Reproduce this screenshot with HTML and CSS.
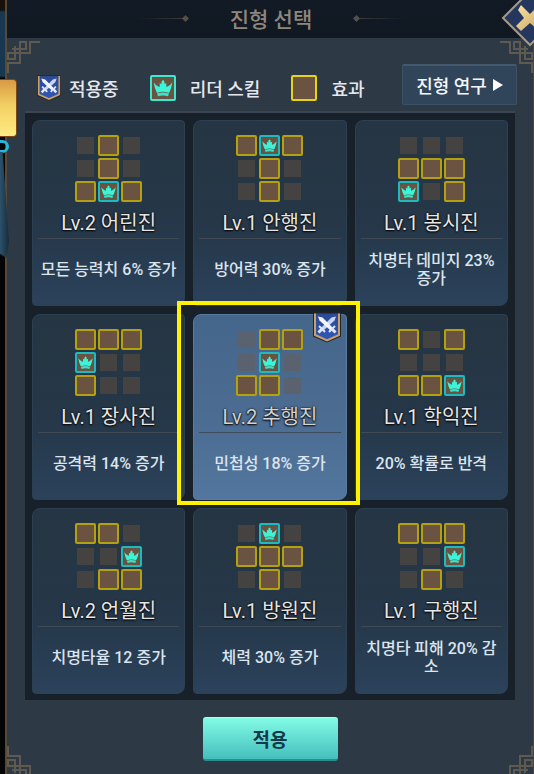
FILE: index.html
```
<!DOCTYPE html>
<html lang="ko">
<head>
  <meta charset="UTF-8">
  <meta name="viewport" content="width=device-width, initial-scale=1.0">
  <title>진형 선택</title>
  <link rel="stylesheet" href="styles.css">
</head>
<body>
  <!-- Shared icons -->
  <svg class="defs" aria-hidden="true">
    <defs>
      <linearGradient id="blue" x1="0" y1="0" x2="0" y2="1">
        <stop offset="0" stop-color="#2c4a94"/>
        <stop offset="1" stop-color="#2f57b8"/>
      </linearGradient>
      <linearGradient id="gold" x1="0" y1="0" x2="1" y2="1">
        <stop offset="0" stop-color="#f7e3a4"/>
        <stop offset="1" stop-color="#c9a560"/>
      </linearGradient>
      <symbol id="crown" viewBox="0 0 20 20">
        <path d="M1.500 5Q5 9 7 9L7 5.500L8.500 6.500Q8.500 3 10 3Q11.500 3 11.500 6.500L13 5.500L13 9Q15 9 18.500 5Q17.500 11 15.500 14.500Q10 12.500 4.500 14.500Q2.500 11 1.500 5Z" fill="#3cf5d8"/>
        <path d="M4.500 15Q10 13 15.500 15L14.500 17.500Q10 16 5.500 17.500Z" fill="#37e3cb"/>
      </symbol>
      <symbol id="shield" viewBox="0 0 28 30">
        <path d="M0 0H28V24L14 30L0 24Z" fill="#23242c"/>
        <path d="M2 1V22.500L14 28L26 22.500V1" fill="url(#blue)" stroke="#c9a166" stroke-width="2"/>
        <path d="M23 4L18.500 5L8 15.500L10.500 18L21.500 8Z" fill="#c9d5f4"/>
        <path d="M5 4L9.500 5L20 15.500L17.500 18L6.500 8Z" fill="#f2f5ff"/>
        <path d="M6 13.500L12 19.500M22 13.500L16 19.500" stroke="#dfe7fb" stroke-width="2"/>
        <path d="M8.500 17L5.500 20M19.500 17L22.500 20" stroke="#dfe7fb" stroke-width="3"/>
      </symbol>
      <symbol id="fret" viewBox="0 0 34 34">
        <path d="M1 33V23H13V2H19V9H5M33 2H23V13H1V19H8V6" fill="none" stroke="#5f5a50" stroke-width="2"/>
      </symbol>
    </defs>
  </svg>

  <div class="backdrop" aria-hidden="true">
    <span class="gold-tab"></span>
    <span class="ring"></span>
    <span class="cloak"></span>
  </div>

  <main class="panel">
    <svg class="fret top-left" aria-hidden="true"><use href="#fret"/></svg>
    <svg class="fret top-right" aria-hidden="true"><use href="#fret"/></svg>
    <svg class="fret bottom-left" aria-hidden="true"><use href="#fret"/></svg>
    <svg class="fret bottom-right" aria-hidden="true"><use href="#fret"/></svg>

    <header class="title-bar">
      <span class="rule"></span>
      <h1>진형 선택</h1>
      <span class="rule right"></span>
      <button class="close" type="button" aria-label="닫기">
        <svg viewBox="0 0 58 58" aria-hidden="true">
          <path d="M29 1L57 29L29 57L1 29Z" fill="#0d1420"/>
          <path d="M29 2L56 29L29 56L2 29Z" fill="#26375f" stroke="#a59a86" stroke-width="2"/>
          <path d="M20 16L29 25L38 16L43 21L35 29L43 37L38 42L29 34L20 42L15 37L23 29L17 21Z" fill="url(#gold)"/>
        </svg>
      </button>
    </header>

    <div class="legend">
      <ul>
        <li><svg class="shield" aria-hidden="true"><use href="#shield"/></svg>적용중</li>
        <li><span class="cell leader"><svg><use href="#crown"/></svg></span>리더 스킬</li>
        <li><span class="cell on"></span>효과</li>
      </ul>
      <button class="research" type="button">진형 연구
        <svg viewBox="0 0 10 12" aria-hidden="true"><path d="M0 0L10 6L0 12Z" fill="#fff"/></svg>
      </button>
    </div>

    <section class="board">
      <button class="card" type="button">
        <span class="grid">
          <i class="cell"></i><i class="cell on"></i><i class="cell"></i>
          <i class="cell"></i><i class="cell on"></i><i class="cell"></i>
          <i class="cell on"></i><i class="cell leader"><svg><use href="#crown"/></svg></i><i class="cell on"></i>
        </span>
        <span class="name">Lv.2 어린진</span>
        <span class="effect">모든 능력치 6% 증가</span>
      </button>

      <button class="card" type="button">
        <span class="grid">
          <i class="cell on"></i><i class="cell leader"><svg><use href="#crown"/></svg></i><i class="cell on"></i>
          <i class="cell"></i><i class="cell on"></i><i class="cell"></i>
          <i class="cell"></i><i class="cell on"></i><i class="cell"></i>
        </span>
        <span class="name">Lv.1 안행진</span>
        <span class="effect">방어력 30% 증가</span>
      </button>

      <button class="card" type="button">
        <span class="grid">
          <i class="cell"></i><i class="cell"></i><i class="cell"></i>
          <i class="cell on"></i><i class="cell on"></i><i class="cell on"></i>
          <i class="cell leader"><svg><use href="#crown"/></svg></i><i class="cell"></i><i class="cell on"></i>
        </span>
        <span class="name">Lv.1 봉시진</span>
        <span class="effect">치명타 데미지 23%<br>증가</span>
      </button>

      <button class="card" type="button">
        <span class="grid">
          <i class="cell on"></i><i class="cell on"></i><i class="cell on"></i>
          <i class="cell leader"><svg><use href="#crown"/></svg></i><i class="cell"></i><i class="cell"></i>
          <i class="cell on"></i><i class="cell"></i><i class="cell"></i>
        </span>
        <span class="name">Lv.1 장사진</span>
        <span class="effect">공격력 14% 증가</span>
      </button>

      <button class="card selected" type="button" aria-pressed="true">
        <svg class="shield badge" aria-hidden="true"><use href="#shield"/></svg>
        <span class="grid">
          <i class="cell"></i><i class="cell on"></i><i class="cell on"></i>
          <i class="cell"></i><i class="cell leader"><svg><use href="#crown"/></svg></i><i class="cell"></i>
          <i class="cell on"></i><i class="cell on"></i><i class="cell"></i>
        </span>
        <span class="name">Lv.2 추행진</span>
        <span class="effect">민첩성 18% 증가</span>
      </button>

      <button class="card" type="button">
        <span class="grid">
          <i class="cell on"></i><i class="cell"></i><i class="cell on"></i>
          <i class="cell"></i><i class="cell"></i><i class="cell"></i>
          <i class="cell on"></i><i class="cell on"></i><i class="cell leader"><svg><use href="#crown"/></svg></i>
        </span>
        <span class="name">Lv.1 학익진</span>
        <span class="effect">20% 확률로 반격</span>
      </button>

      <button class="card" type="button">
        <span class="grid">
          <i class="cell on"></i><i class="cell on"></i><i class="cell"></i>
          <i class="cell"></i><i class="cell"></i><i class="cell leader"><svg><use href="#crown"/></svg></i>
          <i class="cell"></i><i class="cell on"></i><i class="cell on"></i>
        </span>
        <span class="name">Lv.2 언월진</span>
        <span class="effect">치명타율 12 증가</span>
      </button>

      <button class="card" type="button">
        <span class="grid">
          <i class="cell"></i><i class="cell leader"><svg><use href="#crown"/></svg></i><i class="cell"></i>
          <i class="cell on"></i><i class="cell on"></i><i class="cell on"></i>
          <i class="cell"></i><i class="cell on"></i><i class="cell"></i>
        </span>
        <span class="name">Lv.1 방원진</span>
        <span class="effect">체력 30% 증가</span>
      </button>

      <button class="card" type="button">
        <span class="grid">
          <i class="cell on"></i><i class="cell on"></i><i class="cell on"></i>
          <i class="cell"></i><i class="cell"></i><i class="cell leader"><svg><use href="#crown"/></svg></i>
          <i class="cell"></i><i class="cell on"></i><i class="cell"></i>
        </span>
        <span class="name">Lv.1 구행진</span>
        <span class="effect">치명타 피해 20% 감<br>소</span>
      </button>
    </section>

    <button class="apply" type="button">적용</button>
  </main>
</body>
</html>
```
FILE: styles.css
```
* {
  box-sizing: border-box;
}

body {
  margin: 0;
  min-height: 100vh;
  display: flex;
  position: relative;
  overflow: hidden;
  background: #050505;
  font-family: Roboto, "Noto Sans CJK KR", sans-serif;
  color: #e4e8ee;
}

button {
  font: inherit;
  color: inherit;
  border: none;
  padding: 0;
  cursor: pointer;
}

.defs {
  position: absolute;
  width: 0;
  height: 0;
}

/* Game scene behind the panel */
.backdrop {
  width: 5px;
  flex: none;
  background: linear-gradient(#1a100a 0 10px, #173850 12px 76px, #050505 78px);
}

.gold-tab,
.ring,
.cloak {
  position: absolute;
  left: 0;
  z-index: 2;
}

.gold-tab {
  top: 79px;
  width: 17px;
  height: 58px;
  border: 1px solid #7a4a1c;
  border-left: none;
  border-radius: 0 4px 4px 0;
  background: linear-gradient(#d79a45, #f3cf62 45%, #ffec83);
}

.ring {
  top: 140px;
  width: 9px;
  height: 13px;
  border: 3px solid #29b6dc;
  border-left: none;
  border-radius: 0 8px 8px 0;
}

.cloak {
  top: 152px;
  width: 9px;
  height: 106px;
  background: linear-gradient(90deg, #2c526c, #172b3b);
  clip-path: polygon(0 0, 30% 0, 100% 85%, 70% 100%, 0 96%);
}

/* Panel */
.panel {
  position: relative;
  flex: 1;
  display: flex;
  flex-direction: column;
  border-left: 2px solid #574936;
  border-right: 1px solid #4b443c;
  background: #2d3945;
}

.fret {
  position: absolute;
  width: 34px;
  height: 34px;
}

.top-left {
  top: 40px;
  left: 0;
}

.top-right {
  top: 40px;
  right: 0;
  transform: scaleX(-1);
}

.bottom-left {
  bottom: -4px;
  left: 0;
  transform: scaleY(-1);
}

.bottom-right {
  bottom: -4px;
  right: 0;
  transform: scale(-1);
}

.title-bar {
  position: relative;
  display: flex;
  align-items: center;
  justify-content: center;
  gap: 42px;
  height: 38px;
  padding: 0 0 2px 2px;
  background: linear-gradient(#121a25, #101822);
}

.title-bar h1 {
  margin: 0;
  font-size: 21px;
  font-weight: 500;
  color: #8f877c;
}

.rule {
  position: relative;
  width: 50px;
  height: 1px;
  background: linear-gradient(90deg, transparent, #443f3b);
}

.rule::after {
  content: "";
  position: absolute;
  right: 0;
  top: -2px;
  width: 5px;
  height: 5px;
  background: #544f49;
  transform: rotate(45deg);
}

.rule.right {
  transform: scaleX(-1);
}

.close {
  position: absolute;
  top: -11px;
  right: -26px;
  width: 58px;
  height: 58px;
  background: none;
}

.close svg {
  display: block;
}

/* Legend */
.legend {
  display: flex;
  align-items: center;
  justify-content: space-between;
  height: 73px;
  padding: 22px 16px 0 30px;
}

.legend ul {
  display: flex;
  gap: 31px;
  margin: 0;
  padding: 4px 0 0;
  list-style: none;
  font-size: 18px;
  font-weight: 500;
}

.legend li {
  display: flex;
  align-items: center;
  gap: 8px;
}

.legend li + li {
  gap: 14px;
}

.legend .cell {
  width: 26px;
  height: 26px;
}

.legend .cell.on {
  border-color: #e8d31b;
}

.legend .cell.leader {
  border-color: #3ce8cf;
}

.shield {
  width: 24px;
  height: 26px;
}

.research {
  display: flex;
  align-items: center;
  justify-content: center;
  gap: 6px;
  width: 115px;
  height: 41px;
  margin-bottom: 2px;
  border: 1px solid #3b5166;
  border-top: 2px solid #46596c;
  border-radius: 2px;
  background: #30455a;
  color: #f4f6f8;
  font-size: 18px;
  font-weight: 500;
}

.research svg {
  width: 10px;
  height: 12px;
}

/* Formation cards */
.board {
  display: grid;
  grid-template-columns: repeat(3, 1fr);
  gap: 8px;
  margin: 0 18px;
  padding: 7px 7px 6px;
  border-top: 2px solid #3c4653;
  background: #18212a;
}

.card {
  position: relative;
  display: flex;
  flex-direction: column;
  align-items: center;
  min-height: 186px;
  padding: 14px 5px 0;
  border: 1px solid #2c4052;
  border-radius: 8px 4px 8px 4px;
  background: linear-gradient(#263543, #253748 55%, #2b425b);
}

.grid {
  display: grid;
  grid-template-columns: repeat(3, 21px);
  gap: 2px;
}

.cell {
  display: block;
  height: 21px;
  border: 2px solid transparent;
  border-radius: 2px;
  background: #444341 padding-box;
}

.cell.on {
  border-color: #b5a110;
  background: #6b5341;
}

.cell.leader {
  border-color: #1fb9c0;
  background: #6b5341;
}

.cell svg {
  display: block;
  width: 100%;
  height: 100%;
}

.name {
  width: 100%;
  padding: 9px 0 3px;
  border-bottom: 1px solid #414a54;
  font-size: 20px;
  line-height: 24px;
  white-space: nowrap;
  color: #e8e6e2;
  text-shadow: 0 0 2px #000, 0 1px 2px #000;
}

.effect {
  display: flex;
  flex: 1;
  align-items: center;
  padding-bottom: 5px;
  font-size: 16px;
  line-height: 18px;
  font-weight: 500;
  white-space: nowrap;
  color: #dce4ee;
}

.selected {
  border-color: #5a7ba0;
  background: linear-gradient(#45668b, #4b6b90 50%, #52769e);
}

/* Highlight frame round the chosen card */
.selected::after {
  content: "";
  position: absolute;
  inset: -14px -14px -6px -17px;
  border: 4px solid #fff200;
  z-index: 1;
}

.selected .cell:not(.on, .leader) {
  background: #5a6270 padding-box;
}

.selected .name {
  border-color: #3f4b5b;
  color: #d3d3d3;
}

.badge {
  position: absolute;
  top: -3px;
  right: 5px;
  width: 28px;
  height: 31px;
}

.apply {
  align-self: center;
  width: 135px;
  height: 44px;
  margin: 17px 0 14px;
  border-top: 1px solid #a6ffee;
  border-bottom: 2px solid #2b8f90;
  border-radius: 3px;
  background: linear-gradient(#82fbe5, #45bfbd);
  color: #123a4c;
  font-size: 19px;
  font-weight: 700;
}
```
